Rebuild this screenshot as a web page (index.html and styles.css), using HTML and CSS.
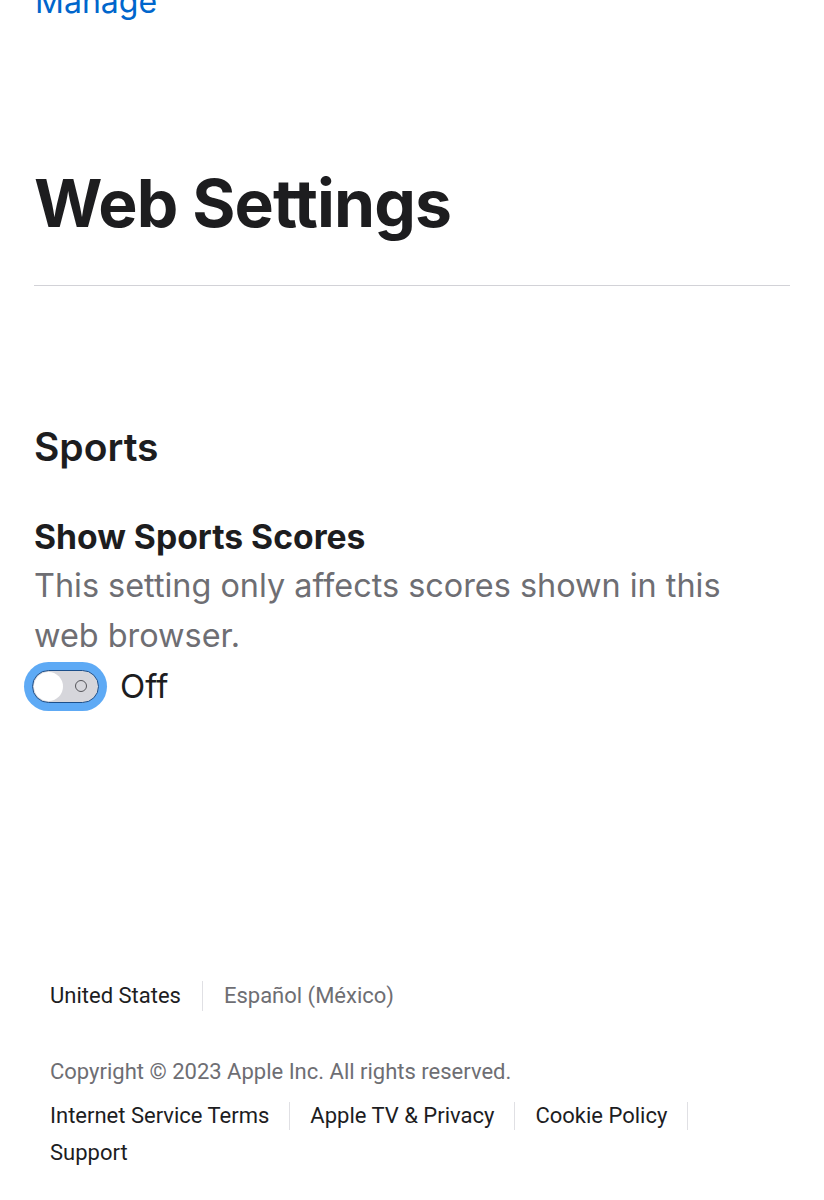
FILE: index.html
```html
<!DOCTYPE html>
<html lang="en">
<head>
<meta charset="utf-8">
<title>Web Settings</title>
<link rel="stylesheet" href="styles.css">
</head>
<body>
<div class="page">
  <main class="content">
    <a class="manage" href="#">Manage</a>
    <h1 class="title">Web Settings</h1>
    <hr class="rule">
    <section class="section">
      <h2 class="section-title">Sports</h2>
      <div class="setting">
        <h3 class="setting-title">Show Sports Scores</h3>
        <p class="setting-desc">This setting only affects scores shown in this web browser.</p>
        <label class="toggle-row">
          <span class="toggle">
            <span class="track">
              <span class="knob"></span>
              <span class="off-mark"></span>
            </span>
          </span>
          <span class="toggle-label">Off</span>
        </label>
      </div>
    </section>
  </main>
  <footer class="footer">
    <div class="locale">
      <span class="locale-item current">United States</span>
      <span class="locale-item alt">Español (México)</span>
    </div>
    <p class="copyright">Copyright © 2023 Apple Inc. All rights reserved.</p>
    <nav class="links">
      <a href="#">Internet Service Terms</a>
      <a href="#">Apple TV &amp; Privacy</a>
      <a href="#">Cookie Policy</a>
      <a href="#">Support</a>
    </nav>
  </footer>
</div>
</body>
</html>
```

FILE: styles.css
```css
* { box-sizing: border-box; }
html, body { margin: 0; padding: 0; background: #fff; }
body {
  font-family: Inter, "Liberation Sans", sans-serif;
  color: #1d1d1f;
  width: 824px;
  height: 1200px;
  overflow: hidden;
}
.page { display: flex; flex-direction: column; }
.content { padding: 0 34px; }

.manage {
  display: block;
  margin-top: -18px;
  font-size: 32px;
  line-height: 40px;
  color: #0066cc;
  text-decoration: none;
  padding-left: 1px;
}
.title {
  margin: 141px 0 0;
  font-weight: 700;
  font-size: 66px;
  line-height: 80px;
  letter-spacing: -0.9px;
  color: #1d1d1f;
}
.rule {
  margin: 42px 0 0;
  border: 0;
  border-top: 1px solid #d2d2d7;
  height: 0;
}
.section { margin-top: 136px; }
.section-title {
  margin: 0;
  font-weight: 600;
  font-size: 39px;
  line-height: 50px;
  color: #1d1d1f;
}
.setting { margin-top: 43px; }
.setting-title {
  margin: 0;
  font-weight: 700;
  font-size: 33.7px;
  line-height: 44px;
}
.setting-desc {
  margin: 0;
  margin-top: 2px;
  font-size: 32.4px;
  line-height: 50px;
  color: #6e6e73;
  max-width: 705px;
}
.toggle-row {
  display: flex;
  align-items: center;
  gap: 13px;
  margin-left: -10px;
}
.toggle {
  display: flex;
  padding: 8px;
  border-radius: 26px;
  background: #5eaaf5;
}
.track {
  position: relative;
  display: flex;
  align-items: center;
  width: 67px;
  height: 33px;
  border-radius: 17px;
  background: #d6d6db;
  border: 1.5px solid #1c4f8a;
  padding: 0 1px;
}
.knob {
  width: 29px;
  height: 29px;
  border-radius: 50%;
  background: #fff;
}
.off-mark {
  position: absolute;
  left: 42px;
  top: 50%;
  width: 12px;
  height: 12px;
  margin-top: -6px;
  border: 1.5px solid #55555a;
  border-radius: 50%;
}
.toggle-label {
  font-size: 33px;
  line-height: 50px;
  color: #1d1d1f;
}

.footer {
  padding: 0 50px;
  font-family: Roboto, "Liberation Sans", sans-serif;
  font-size: 22px;
}
.locale { display: flex; align-items: center; margin-top: 270px; }
.locale-item { line-height: 30px; }
.locale-item.current { color: #1d1d1f; padding-right: 21px; border-right: 1px solid #e0e0e4; }
.locale-item.alt { color: #6e6e73; padding-left: 21px; }
.copyright {
  margin: 46px 0 0;
  line-height: 30px;
  color: #6e6e73;
}
.links {
  display: flex;
  flex-wrap: wrap;
  row-gap: 9px;
  margin-top: 15px;
}
.links a {
  color: #1d1d1f;
  text-decoration: none;
  line-height: 28px;
  padding-right: 20px;
  margin-right: 20px;
  border-right: 1px solid #e0e0e4;
}
.links a:last-child { border-right: 0; }
```
